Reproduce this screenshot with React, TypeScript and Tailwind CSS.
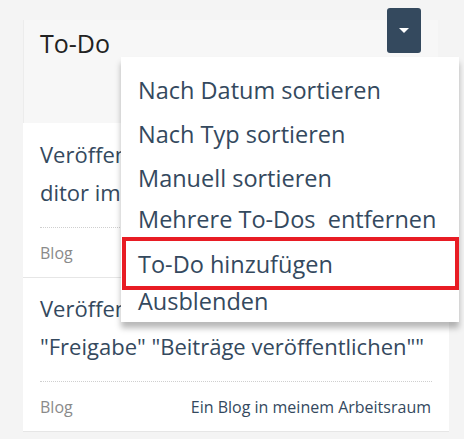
import React from "react";

type Task = {
    lines: string[];
    kind: string;
    place?: string;
};

const tasks: Task[] = [
    {
        lines: ["Veröffentlichen Sie den Beitrag im E", "ditor im Arbeitsraum"],
        kind: "Blog",
    },
    {
        lines: ["Veröffentlichen Sie den Beitrag", "\"Freigabe\" \"Beiträge veröffentlichen\"\""],
        kind: "Blog",
        place: "Ein Blog in meinem Arbeitsraum",
    },
];

// menu rows carry their own heights, the spacing in this menu is uneven
const menuItems = [
    { label: "Nach Datum sortieren", cls: "h-[44px]" },
    { label: "Nach Typ sortieren", cls: "h-[44px]" },
    { label: "Manuell sortieren", cls: "h-[41px]" },
    { label: "Mehrere To-Dos\u00a0\u00a0entfernen", cls: "h-[45px]" },
    { label: "To-Do hinzufügen", cls: "h-[37px]" },
    { label: "Ausblenden", cls: "h-[43px] pl-[4px] text-[#5a5a5a]" },
];

function TaskRow({ task }: { task: Task }) {
    return (
        <div className="border-b border-[#e6e6e6] px-[17px] pt-[11px] pb-[12px]">
            <div className="text-[22px] leading-[38px] text-[#34495e]">
                {task.lines.map((l) => (
                    <div key={l} className="whitespace-nowrap">
                        {l}
                    </div>
                ))}
            </div>
            <div className="mt-[16px] border-t border-dotted border-[#cfcfcf] pt-[13px] flex items-center justify-between text-[16px] leading-[24px]">
                <span className="text-[#8a8a8a]">{task.kind}</span>
                {task.place && <span className="pr-[1px] text-[#34495e]">{task.place}</span>}
            </div>
        </div>
    );
}

export default function App() {
    return (
        <div className="relative h-[439px] w-[464px] overflow-hidden bg-[#f4f4f4] font-['Open_Sans',sans-serif]">
            {/* Card */}
            <div className="ml-[23px] pt-[20px] w-[426px]">
                <div className="h-[103px] w-[415px] bg-[#f7f7f7] border-l border-[#ececec] px-[16px] pt-[7px]">
                    <h2 className="text-[25px] leading-[32px] text-[#222]">To-Do</h2>
                </div>
                <div className="bg-white pt-[1px]">
                    {tasks.map((t, i) => (
                        <TaskRow key={i} task={t} />
                    ))}
                </div>
            </div>

            {/* Dropdown toggle */}
            <button className="absolute left-[387px] top-[8px] flex h-[45px] w-[34px] items-center justify-center rounded-[3px] bg-[#34495e]">
                <span className="h-0 w-0 border-x-[5px] border-t-[5px] border-x-transparent border-t-white" />
            </button>

            {/* Open menu */}
            <div className="absolute left-[121px] top-[57px] w-[338px] bg-white pt-[11px] shadow-[0_6px_6px_rgba(0,0,0,0.28)]">
                {menuItems.map((m) => (
                    <div
                        key={m.label}
                        className={`pl-[17px] text-[23.5px] leading-[44px] text-[#34495e] whitespace-nowrap ${m.cls}`}
                    >
                        {m.label}
                    </div>
                ))}
            </div>

            {/* Highlight around "To-Do hinzufügen" */}
            <div className="absolute left-[122px] top-[237px] h-[53px] w-[337px] border-[4px] border-[#e81c24]" />
        </div>
    );
}
